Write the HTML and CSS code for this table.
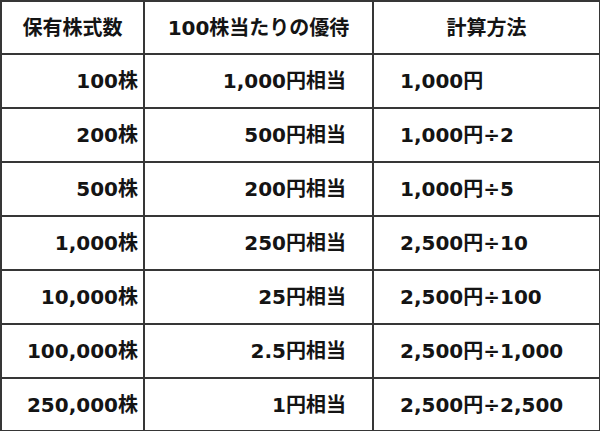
FILE: index.html
```html
<!DOCTYPE html>
<html lang="ja">
<head>
<meta charset="utf-8">
<link rel="stylesheet" href="styles.css">
</head>
<body>
<table class="tbl">
  <colgroup>
    <col class="c1"><col class="c2"><col class="c3">
  </colgroup>
  <thead>
    <tr class="head"><th>保有株式数</th><th>100株当たりの優待</th><th>計算方法</th></tr>
  </thead>
  <tbody>
    <tr><td class="r1">100株</td><td class="r2">1,000円相当</td><td class="l3">1,000円</td></tr>
    <tr><td class="r1">200株</td><td class="r2">500円相当</td><td class="l3">1,000円÷2</td></tr>
    <tr><td class="r1">500株</td><td class="r2">200円相当</td><td class="l3">1,000円÷5</td></tr>
    <tr><td class="r1">1,000株</td><td class="r2">250円相当</td><td class="l3">2,500円÷10</td></tr>
    <tr><td class="r1">10,000株</td><td class="r2">25円相当</td><td class="l3">2,500円÷100</td></tr>
    <tr><td class="r1">100,000株</td><td class="r2">2.5円相当</td><td class="l3">2,500円÷1,000</td></tr>
    <tr class="last"><td class="r1">250,000株</td><td class="r2">1円相当</td><td class="l3">2,500円÷2,500</td></tr>
  </tbody>
</table>
</body>
</html>
```
FILE: styles.css
```css
html, body {
  margin: 0;
  padding: 0;
  background: #ffffff;
}
.tbl {
  border-collapse: collapse;
  table-layout: fixed;
  width: 599px;
  font-family: "DejaVu Sans", "Noto Sans CJK JP", sans-serif;
  font-weight: bold;
  font-size: 20px;
  color: #141414;
}
.c1 { width: 143px; }
.c2 { width: 229px; }
.c3 { width: 227px; }
.tbl th, .tbl td {
  border: 2px solid #363636;
  padding: 0;
  white-space: nowrap;
  vertical-align: middle;
  line-height: 24px;
}
.tbl th {
  text-align: center;
  font-weight: bold;
}
.head { height: 53px; }
.tbl tbody tr { height: 54px; }
.tbl tbody tr.last { height: 53px; }
.r1 { text-align: right; padding-right: 5px !important; }
.r2 { text-align: right; padding-right: 26px !important; }
.l3 { text-align: left; padding-left: 26px !important; }
```
